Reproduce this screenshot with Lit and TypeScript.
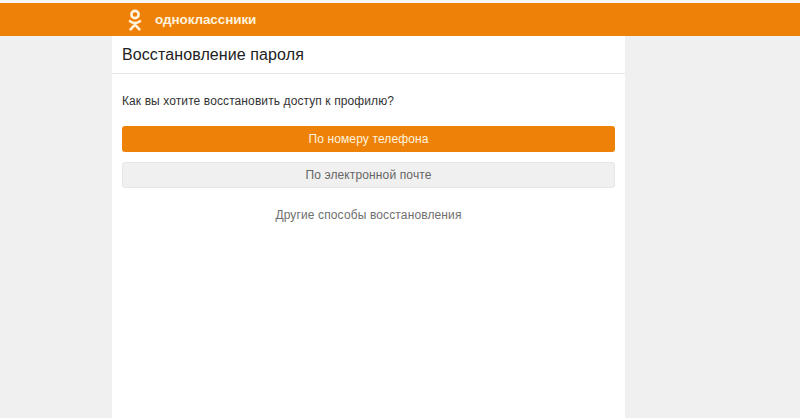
import { LitElement, html, css } from "lit";
import { customElement } from "lit/decorators.js";

@customElement("app-root")
export class AppRoot extends LitElement {
  static styles = css`
    :host { display: block; height: 418px; overflow: hidden; background: #f0f0f0; font-family: "Liberation Sans", Arial, sans-serif; }
    .strip { height: 3px; background: #f6f6f6; }
    .bar { height: 33px; background: #ee8208; padding-left: 112px; display: flex; align-items: center; }
    .logo { margin-left: 16px; width: 14px; height: 22px; flex: none; }
    .brand { margin-left: 13px; color: #fff3dd; font-size: 13.5px; font-weight: bold; letter-spacing: -0.1px; }
    .page { width: 513px; margin-left: 112px; height: 382px; background: #fff; }
    .head { height: 37px; border-bottom: 1px solid #e4e4e4; padding-left: 10px; display: flex; align-items: center; font-size: 16px; color: #222; letter-spacing: 0.1px; }
    .body { padding: 0 10px; display: flex; flex-direction: column; }
    .q { margin-top: 20px; height: 14px; line-height: 14px; font-size: 12px; letter-spacing: 0.1px; color: #333; }
    .btn { height: 26px; border-radius: 3px; box-sizing: border-box; display: flex; align-items: center; justify-content: center; font-size: 12px; letter-spacing: 0.13px; }
    .primary { margin-top: 18px; background: #ee8208; color: #fff3dd; }
    .secondary { margin-top: 10px; background: #f0f0f0; color: #666; border: 1px solid #e6e6e6; }
    .other { margin-top: 20px; text-align: center; font-size: 12px; letter-spacing: 0.13px; line-height: 15px; color: #6f6f6f; }
  `;

  render() {
    return html`
      <div class="strip"></div>
      <div class="bar">
        <svg class="logo" viewBox="0 0 14 22" aria-hidden="true">
          <circle cx="7" cy="5.5" r="3.6" fill="none" stroke="#fff3dd" stroke-width="2.6"/>
          <path d="M2 12.2c3 2.2 7 2.2 10 0M7 14v1.6M7 15.6 2.6 20.4M7 15.6l4.4 4.8" fill="none" stroke="#fff3dd" stroke-width="2.6" stroke-linecap="round"/>
        </svg>
        <span class="brand">одноклассники</span>
      </div>
      <div class="page">
        <div class="head">Восстановление пароля</div>
        <div class="body">
          <div class="q">Как вы хотите восстановить доступ к профилю?</div>
          <div class="btn primary">По номеру телефона</div>
          <div class="btn secondary">По электронной почте</div>
          <div class="other">Другие способы восстановления</div>
        </div>
      </div>
    `;
  }
}
